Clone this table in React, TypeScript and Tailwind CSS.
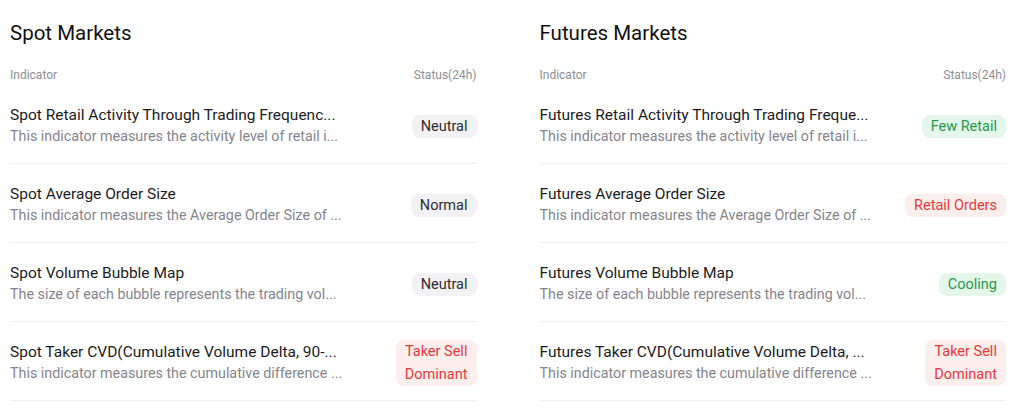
type Tone = "neutral" | "green" | "red";

type Row = {
  title: string;
  desc: string;
  status: string[];
  tone: Tone;
};

const spotRows: Row[] = [
  {
    title: "Spot Retail Activity Through Trading Frequenc...",
    desc: "This indicator measures the activity level of retail i...",
    status: ["Neutral"],
    tone: "neutral",
  },
  {
    title: "Spot Average Order Size",
    desc: "This indicator measures the Average Order Size of ...",
    status: ["Normal"],
    tone: "neutral",
  },
  {
    title: "Spot Volume Bubble Map",
    desc: "The size of each bubble represents the trading vol...",
    status: ["Neutral"],
    tone: "neutral",
  },
  {
    title: "Spot Taker CVD(Cumulative Volume Delta, 90-...",
    desc: "This indicator measures the cumulative difference ...",
    status: ["Taker Sell", "Dominant"],
    tone: "red",
  },
];

const futuresRows: Row[] = [
  {
    title: "Futures Retail Activity Through Trading Freque...",
    desc: "This indicator measures the activity level of retail i...",
    status: ["Few Retail"],
    tone: "green",
  },
  {
    title: "Futures Average Order Size",
    desc: "This indicator measures the Average Order Size of ...",
    status: ["Retail Orders"],
    tone: "red",
  },
  {
    title: "Futures Volume Bubble Map",
    desc: "The size of each bubble represents the trading vol...",
    status: ["Cooling"],
    tone: "green",
  },
  {
    title: "Futures Taker CVD(Cumulative Volume Delta, ...",
    desc: "This indicator measures the cumulative difference ...",
    status: ["Taker Sell", "Dominant"],
    tone: "red",
  },
];

const toneClass: Record<Tone, string> = {
  neutral: "bg-[#f2f2f5] text-[#2c2c2e]",
  green: "bg-[#e5f6ea] text-[#1f9a4e]",
  red: "bg-[#fdeeee] text-[#e5393b]",
};

function StatusBadge({ lines, tone }: { lines: string[]; tone: Tone }) {
  return (
    <div
      className={`whitespace-nowrap rounded-lg px-[9px] text-center text-[14.5px] leading-[23px] ${toneClass[tone]}`}
    >
      {lines.map((l) => (
        <div key={l}>{l}</div>
      ))}
    </div>
  );
}

function MarketTable({ title, rows }: { title: string; rows: Row[] }) {
  return (
    <div>
      <h2 className="text-[20.5px] leading-[28px] text-[#111]">{title}</h2>
      <div className="mt-[19px] mb-[1px] flex items-center justify-between text-[12px] leading-[18px] text-[#8e8e93]">
        <span>Indicator</span>
        <span>Status(24h)</span>
      </div>
      {rows.map((r) => (
        <div
          key={r.title}
          className="flex h-[79px] items-center justify-between border-b border-[#efeff1] pt-[4px]"
        >
          <div className="w-[345px] min-w-0">
            <p className="truncate text-[15.5px] leading-[21px] text-[#1c1c1e]">{r.title}</p>
            <p className="truncate text-[14.3px] leading-[21px] text-[#85858b]">{r.desc}</p>
          </div>
          <StatusBadge lines={r.status} tone={r.tone} />
        </div>
      ))}
    </div>
  );
}

export default function App() {
  return (
    <div
      className="h-[416px] w-[1024px] overflow-hidden bg-white pt-[19px] pl-[10px] pr-[18px]"
      style={{ fontFamily: "Roboto, 'Noto Sans', sans-serif" }}
    >
      <div className="grid grid-cols-2 gap-x-[63px]">
        <MarketTable title="Spot Markets" rows={spotRows} />
        <MarketTable title="Futures Markets" rows={futuresRows} />
      </div>
    </div>
  );
}
